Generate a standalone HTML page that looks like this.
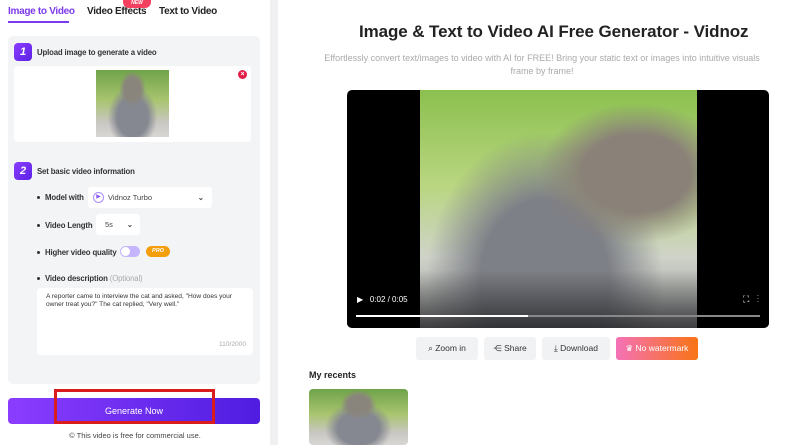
<!DOCTYPE html>
<html><head><meta charset="utf-8"><style>
*{box-sizing:border-box;margin:0;padding:0}
body{width:800px;height:445px;overflow:hidden;background:#fff;font-family:"Liberation Sans",sans-serif;position:relative;color:#222}
.abs{position:absolute}
.tab{position:absolute;top:6px;font-size:10px;font-weight:bold;color:#222;letter-spacing:-0.3px}
.num{position:absolute;width:18px;height:18px;border-radius:4px;background:linear-gradient(135deg,#8b3dff,#5b21e6);color:#fff;font-size:11px;font-weight:bold;font-style:italic;text-align:center;line-height:18px}
.lbl{font-size:7.8px;font-weight:bold;color:#333;position:absolute;letter-spacing:-0.15px}
.dot{position:absolute;width:3px;height:3px;border-radius:50%;background:#333}
.cat{background:radial-gradient(ellipse at 50% 28%,#8a857c 0 16%,transparent 26%),radial-gradient(ellipse at 50% 70%,#858890 0 30%,transparent 48%),linear-gradient(180deg,#6fa34a,#a9c46f 45%,#c9c7c2 78%,#d8d6d4)}
.btn{position:absolute;top:337px;height:23px;background:#f1f2f4;border-radius:3px;font-size:8.5px;color:#333;line-height:23px;text-align:center}
</style></head><body>
<div class="abs" style="left:270px;top:0;width:8px;height:445px;background:#f0f0f2"></div>
<div class="tab" style="left:8px;color:#7c3aed">Image to Video</div>
<div class="abs" style="left:8px;top:21px;width:61px;height:2px;background:#7c3aed"></div>
<div class="tab" style="left:87px">Video Effects</div>
<div class="abs" style="left:123px;top:0;width:28px;height:8px;background:#f43f5e;border-radius:0 0 6px 6px;color:#fff;font-size:5px;font-weight:bold;font-style:italic;text-align:center;line-height:7px">NEW</div>
<div class="tab" style="left:159px">Text to Video</div>
<div class="abs" style="left:8px;top:36px;width:252px;height:348px;background:#f3f4f6;border-radius:5px"></div>
<div class="num" style="left:14px;top:43px">1</div>
<div class="lbl" style="left:37px;top:48px">Upload image to generate a video</div>
<div class="abs" style="left:14px;top:66px;width:237px;height:76px;background:#fff;border-radius:4px"></div>
<div class="abs cat" style="left:96px;top:70px;width:73px;height:67px"></div>
<div class="abs" style="left:238px;top:70px;width:9px;height:9px;border-radius:50%;background:#e11d48;color:#fff;font-size:7px;line-height:9px;text-align:center;font-weight:bold">×</div>
<div class="num" style="left:14px;top:162px">2</div>
<div class="lbl" style="left:37px;top:167px">Set basic video information</div>
<div class="dot" style="left:37px;top:196px"></div><div class="lbl" style="left:45px;top:193px">Model with</div>
<div class="abs" style="left:88px;top:187px;width:124px;height:21px;background:#fff;border-radius:3px;font-size:7.5px;color:#444;line-height:21px;padding-left:20px">Vidnoz Turbo<span style="position:absolute;right:8px;font-weight:bold">⌄</span></div>
<div class="abs" style="left:93px;top:192px;width:11px;height:11px;border-radius:50%;border:1px solid #a78bfa;color:#8b5cf6;font-size:6px;text-align:center;line-height:9px">▶</div>
<div class="dot" style="left:37px;top:224px"></div><div class="lbl" style="left:45px;top:221px">Video Length</div>
<div class="abs" style="left:96px;top:214px;width:44px;height:21px;background:#fff;border-radius:3px;font-size:7.5px;color:#444;line-height:21px;padding-left:9px">5s<span style="position:absolute;right:7px;font-weight:bold">⌄</span></div>
<div class="dot" style="left:37px;top:251px"></div><div class="lbl" style="left:45px;top:248px">Higher video quality</div>
<div class="abs" style="left:120px;top:246px;width:20px;height:11px;border-radius:6px;background:#c4b5fd"><div style="position:absolute;left:1px;top:1px;width:9px;height:9px;border-radius:50%;background:#fff"></div></div>
<div class="abs" style="left:146px;top:246px;width:24px;height:11px;border-radius:6px;background:#f59e0b;color:#fff;font-size:5.5px;font-weight:bold;font-style:italic;text-align:center;line-height:11px">PRO</div>
<div class="dot" style="left:37px;top:277px"></div><div class="lbl" style="left:45px;top:274px">Video description <span style="color:#aaa;font-weight:normal">(Optional)</span></div>
<div class="abs" style="left:37px;top:288px;width:216px;height:67px;background:#fff;border-radius:4px;font-size:6.6px;color:#333;padding:5px 9px;line-height:8px">A reporter came to interview the cat and asked, "How does your owner treat you?" The cat replied, "Very well."<div style="position:absolute;right:7px;bottom:6px;color:#aaa">110/2000</div></div>
<div class="abs" style="left:8px;top:398px;width:252px;height:26px;border-radius:4px;background:linear-gradient(90deg,#8b3dff,#4f1de0);color:#fff;font-size:9px;text-align:center;line-height:26px">Generate Now</div>
<div class="abs" style="left:54px;top:389px;width:161px;height:35px;border:3px solid #d91d1d"></div>
<div class="abs" style="left:0;top:431px;width:270px;text-align:center;font-size:7.5px;color:#444">© This video is free for commercial use.</div>

<div class="abs" style="left:359px;top:22px;white-space:nowrap;font-size:17px;font-weight:bold;color:#222;letter-spacing:-0.1px">Image &amp; Text to Video AI Free Generator - Vidnoz</div>
<div class="abs" style="left:312px;top:52px;width:460px;text-align:center;font-size:9px;color:#aaa;line-height:13px">Effortlessly convert text/images to video with AI for FREE! Bring your static text or images into intuitive visuals frame by frame!</div>
<div class="abs" style="left:347px;top:90px;width:422px;height:238px;background:#000;border-radius:5px;overflow:hidden">
<div class="abs" style="left:73px;top:0;width:277px;height:238px;background:radial-gradient(ellipse at 78% 35%,#8a8278 0 18%,transparent 32%),radial-gradient(ellipse at 45% 80%,#7e8087 0 30%,transparent 55%),linear-gradient(180deg,#8bc04f,#b9d680 40%,#cfd3c8 70%,#9a9aa0)"></div>
<div class="abs" style="left:0;top:180px;width:422px;height:58px;background:linear-gradient(transparent,rgba(0,0,0,.6))"></div>
<div class="abs" style="left:10px;top:205px;color:#fff;font-size:8px">▶ &nbsp; 0:02 / 0:05</div>
<div class="abs" style="right:10px;top:204px;color:#fff;font-size:9px">⛶ &nbsp; ⋮</div>
<div class="abs" style="left:9px;top:225px;width:404px;height:2px;background:#888"><div style="width:172px;height:2px;background:#fff"></div></div>
</div>
<div class="btn" style="left:416px;width:62px">⌕ Zoom in</div>
<div class="btn" style="left:484px;width:52px">⋲ Share</div>
<div class="btn" style="left:542px;width:68px">⤓ Download</div>
<div class="btn" style="left:616px;width:82px;background:linear-gradient(90deg,#f472b6,#f97316);color:#fff">♛ No watermark</div>
<div class="abs" style="left:309px;top:370px;font-size:9px;font-weight:bold;color:#222">My recents</div>
<div class="abs cat" style="left:309px;top:389px;width:99px;height:56px;border-radius:4px"></div>
</body></html>
